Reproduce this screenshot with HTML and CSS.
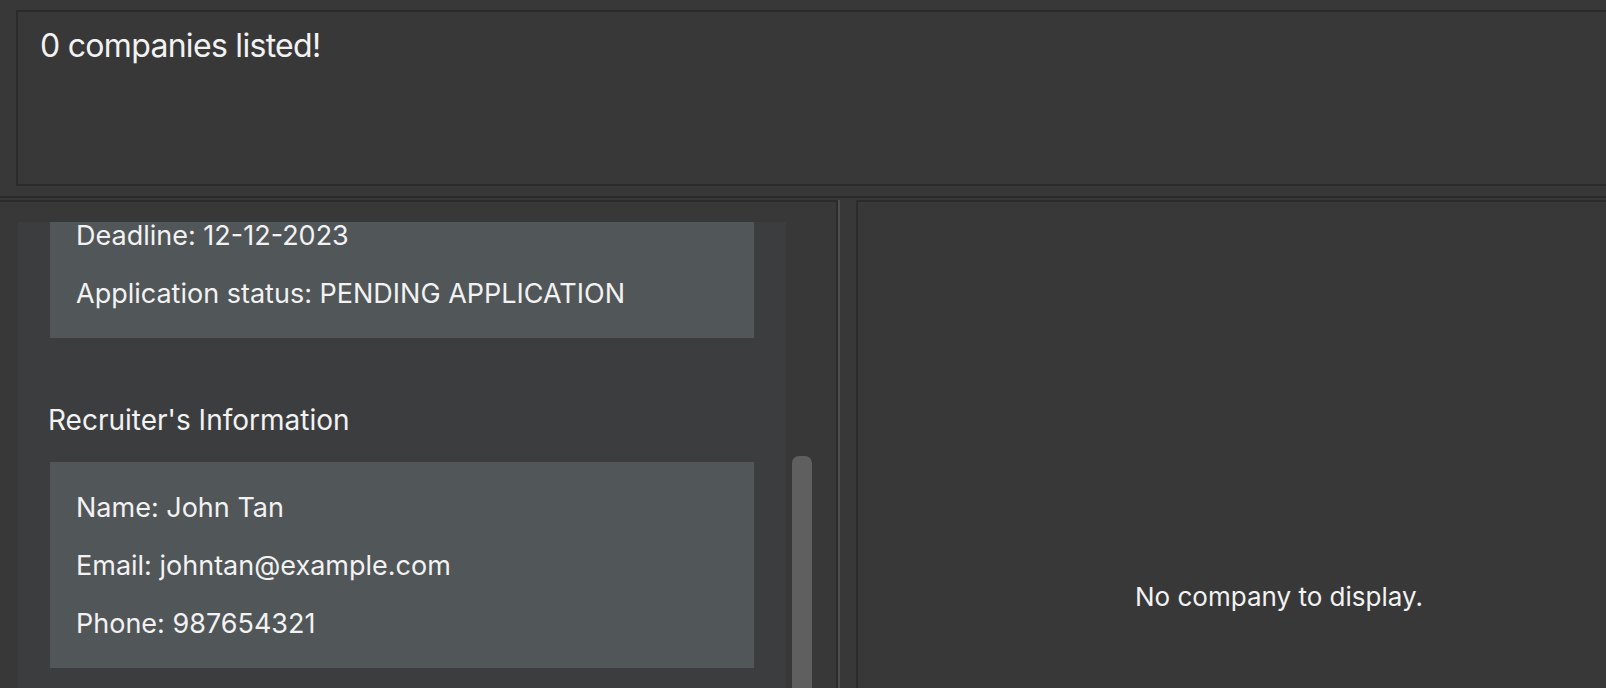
FILE: index.html
```html
<!DOCTYPE html>
<html lang="en">
<head>
<meta charset="utf-8">
<title>Companies</title>
<link rel="stylesheet" href="styles.css">
</head>
<body>
<div class="app">
  <div class="top">
    <div class="result">
      <p class="result-text">0 companies listed!</p>
    </div>
  </div>
  <div class="lower">
    <div class="left-panel">
      <div class="viewport">
        <div class="list">
          <div class="card card-first">
            <p class="line">Deadline: 12-12-2023</p>
            <p class="line">Application status: PENDING APPLICATION</p>
          </div>
          <h2 class="section-title">Recruiter's Information</h2>
          <div class="card">
            <p class="line">Name: John Tan</p>
            <p class="line">Email: johntan@example.com</p>
            <p class="line">Phone: 987654321</p>
          </div>
        </div>
        <div class="scrollbar"><div class="thumb"></div></div>
      </div>
    </div>
    <div class="divider"></div>
    <div class="right-panel">
      <p class="empty">No company to display.</p>
    </div>
  </div>
</div>
</body>
</html>
```
FILE: styles.css
```css
html, body {
  margin: 0;
  padding: 0;
}
body {
  background: #383838;
  color: #f2f2f2;
  font-family: Inter, "Noto Sans", sans-serif;
  overflow: hidden;
}
.app {
  width: 1606px;
  height: 688px;
  display: flex;
  flex-direction: column;
  overflow: hidden;
}
.top {
  padding: 10px 0 0 16px;
}
.result {
  box-sizing: border-box;
  height: 176px;
  border: 2px solid #2b2b2b;
  border-right: none;
  padding: 14px 0 0 22px;
}
.result-text {
  margin: 0;
  font-size: 32px;
  letter-spacing: -0.7px;
  line-height: 40px;
}
.lower {
  flex: 1;
  min-height: 0;
  display: flex;
  margin-top: 10px;
  padding-top: 2px;
  border-top: 2px solid #2b2b2b;
}
.left-panel {
  box-sizing: border-box;
  width: 838px;
  padding: 20px 0 0 18px;
  border-top: 2px solid #2b2b2b;
  border-right: 2px solid #2b2b2b;
  overflow: hidden;
}
.viewport {
  display: flex;
  height: 100%;
  overflow: hidden;
}
.list {
  box-sizing: border-box;
  width: 768px;
  flex: none;
  background: #3c3d3f;
  padding: 0 32px;
}
.card {
  background: #515658;
  padding: 17px 26px 15px;
}
.card-first {
  margin-top: -32px;
}
.line {
  margin: 0;
  font-size: 27px;
  line-height: 58px;
  white-space: nowrap;
}
.section-title {
  margin: 62px 0 22px -2px;
  font-size: 28px;
  font-weight: 400;
  line-height: 40px;
}
.scrollbar {
  flex: 1;
  padding: 234px 24px 0 6px;
}
.thumb {
  height: 320px;
  background: #5f5f5f;
  border-radius: 7px 7px 0 0;
}
.divider {
  box-sizing: border-box;
  width: 18px;
  border-left: 2px solid #4d4d4d;
}
.right-panel {
  flex: 1;
  border-top: 2px solid #2b2b2b;
  border-left: 2px solid #2b2b2b;
  padding: 366px 0 0 277px;
}
.empty {
  margin: 0;
  font-size: 26px;
  line-height: 58px;
  white-space: nowrap;
}
```
